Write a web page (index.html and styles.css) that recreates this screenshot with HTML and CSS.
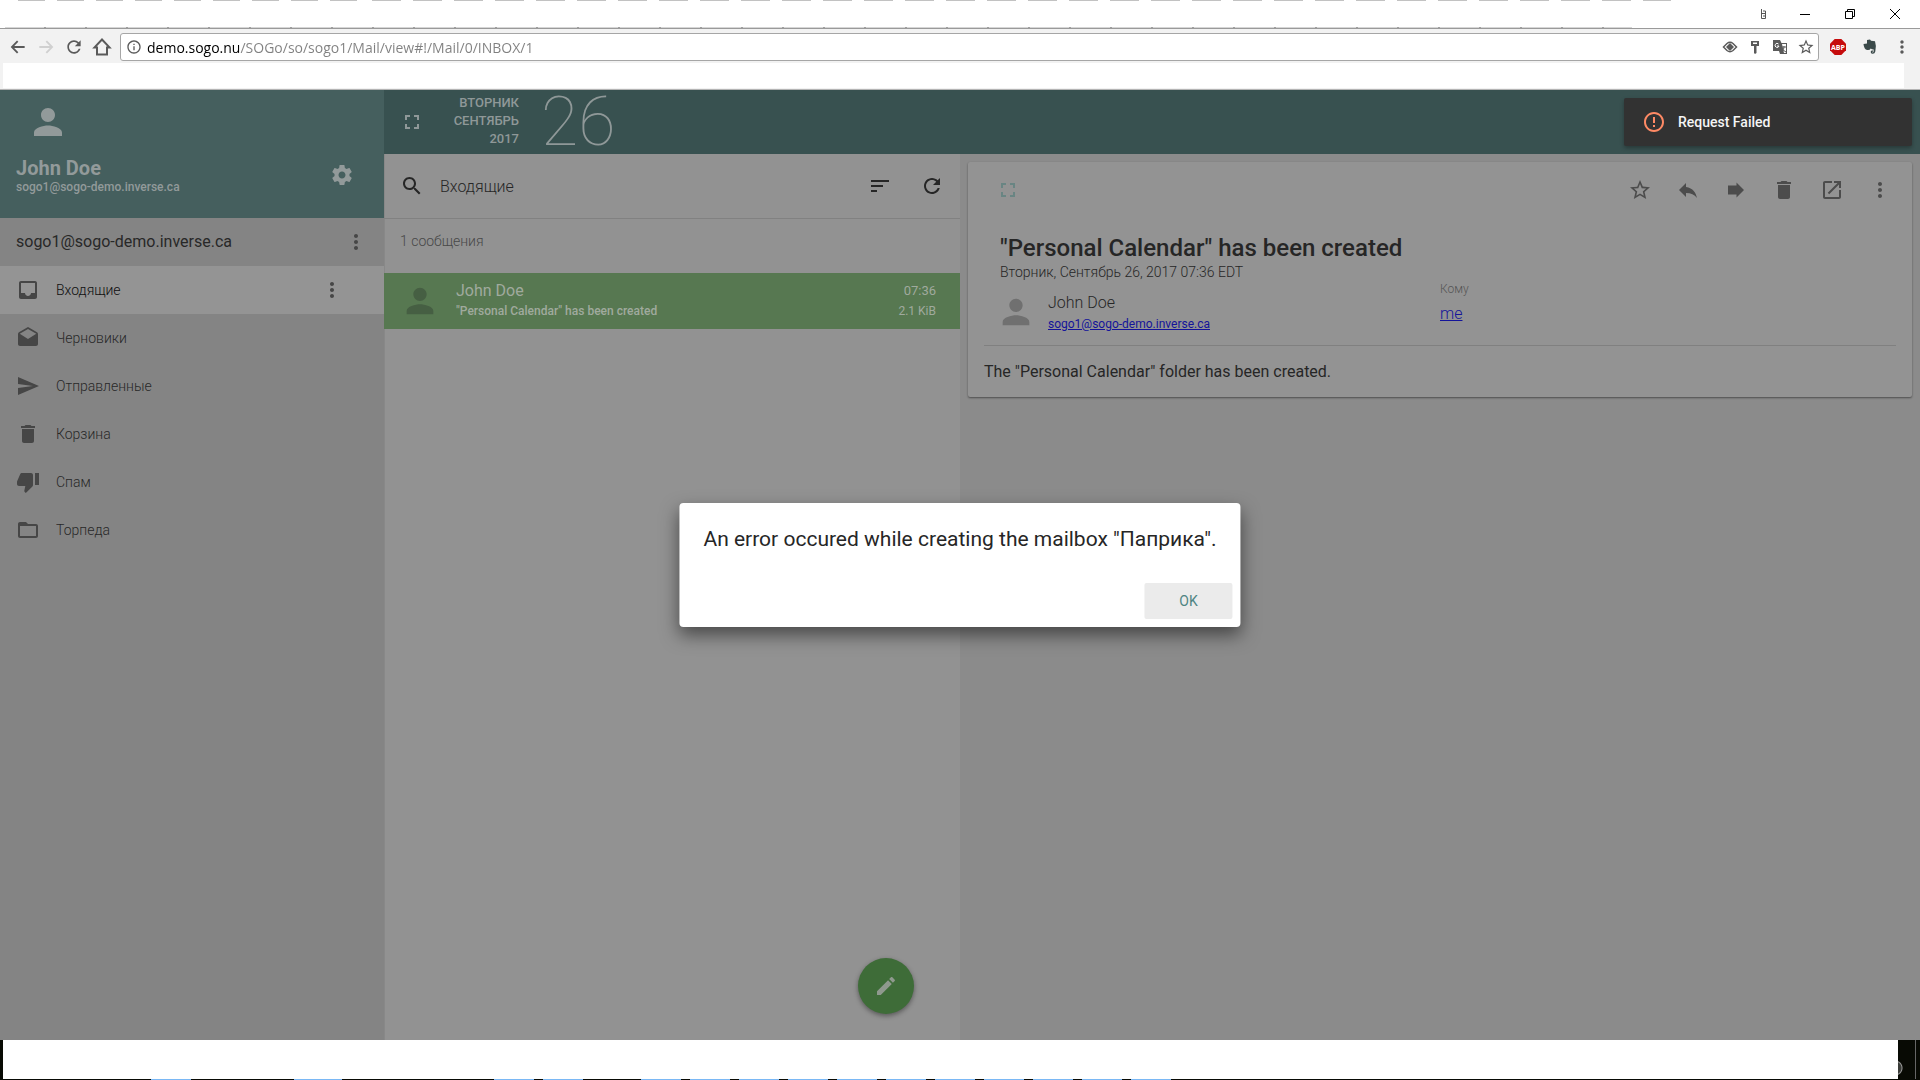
FILE: index.html
```
<!DOCTYPE html>
<html lang="ru">
<head>
    <meta charset="UTF-8">
    <meta name="viewport" content="width=device-width, initial-scale=1.0">
    <title>SOGo</title>
    <link rel="stylesheet" href="styles.css">
</head>
<body>

    <!-- Icons -->
    <svg class="sprite" aria-hidden="true">
        <symbol id="person" viewBox="0 0 24 24"><path d="M12 12c2.21 0 4-1.79 4-4s-1.79-4-4-4-4 1.790-4 4 1.790 4 4 4zm0 2c-2.670 0-8 1.340-8 4v2h16v-2c0-2.660-5.330-4-8-4z"/></symbol>
        <symbol id="gear" viewBox="0 0 24 24"><path d="M19.430 12.980c.04-.32.07-.64.07-.98s-.03-.66-.07-.98l2.110-1.650c.19-.15.24-.42.12-.64l-2-3.460c-.12-.22-.39-.3-.61-.22l-2.490 1c-.52-.4-1.080-.73-1.690-.98l-.38-2.650C14.460 2.180 14.250 2 14 2h-4c-.25 0-.46.18-.49.42l-.38 2.650c-.61.25-1.170.59-1.690.98l-2.490-1c-.23-.09-.49 0-.61.22l-2 3.460c-.13.22-.07.49.12.64l2.110 1.650c-.04.32-.07.65-.07.98s.03.66.07.98l-2.110 1.650c-.19.15-.24.42-.12.64l2 3.460c.12.22.39.3.61.22l2.490-1c.52.4 1.080.73 1.690.98l.38 2.650c.03.24.24.42.49.42h4c.25 0 .46-.18.49-.42l.38-2.650c.61-.25 1.170-.59 1.690-.98l2.490 1c.23.09.49 0 .61-.22l2-3.460c.12-.22.07-.49-.12-.64l-2.110-1.650zM12 15.500c-1.930 0-3.500-1.570-3.500-3.500s1.570-3.500 3.500-3.500 3.500 1.570 3.500 3.500-1.570 3.500-3.500 3.500z"/></symbol>
        <symbol id="more" viewBox="0 0 24 24"><path d="M12 8c1.100 0 2-.9 2-2s-.9-2-2-2-2 .9-2 2 .9 2 2 2zm0 2c-1.100 0-2 .9-2 2s.9 2 2 2 2-.9 2-2-.9-2-2-2zm0 6c-1.100 0-2 .9-2 2s.9 2 2 2 2-.9 2-2-.9-2-2-2z"/></symbol>
        <symbol id="inbox" viewBox="0 0 24 24"><path d="M19 3H5c-1.100 0-2 .9-2 2v14c0 1.100.89 2 2 2h14c1.100 0 2-.9 2-2V5c0-1.100-.9-2-2-2zm0 12h-4c0 1.660-1.350 3-3 3s-3-1.340-3-3H5V5h14v10z"/></symbol>
        <symbol id="drafts" viewBox="0 0 24 24"><path d="M21.990 8c0-.72-.37-1.350-.94-1.700L12 1 2.950 6.300C2.380 6.650 2 7.280 2 8v10c0 1.100.9 2 2 2h16c1.100 0 2-.9 2-2l-.01-10zM12 13L3.740 7.840 12 3l8.260 4.840L12 13z"/></symbol>
        <symbol id="send" viewBox="0 0 24 24"><path d="M2 21l21-9L2 3v7l15 2-15 2z"/></symbol>
        <symbol id="trash" viewBox="0 0 24 24"><path d="M6 19c0 1.100.9 2 2 2h8c1.100 0 2-.9 2-2V7H6v12zM19 4h-3.500l-1-1h-5l-1 1H5v2h14V4z"/></symbol>
        <symbol id="spam" viewBox="0 0 24 24"><path d="M15 3H6c-.83 0-1.540.5-1.840 1.220l-3.020 7.050c-.09.23-.14.47-.14.73v2c0 1.100.9 2 2 2h6.310l-.95 4.570-.03.32c0 .41.17.79.44 1.060L9.830 23l6.590-6.590c.36-.36.58-.86.58-1.410V5c0-1.100-.9-2-2-2zm4 0v12h4V3h-4z"/></symbol>
        <symbol id="folder" viewBox="0 0 24 24"><path d="M20 6h-8l-2-2H4c-1.100 0-1.990.9-1.990 2L2 18c0 1.100.9 2 2 2h16c1.100 0 2-.9 2-2V8c0-1.100-.9-2-2-2zm0 12H4V8h16v10z"/></symbol>
        <symbol id="fullscreen" viewBox="0 0 24 24"><path d="M7 14H5v5h5v-2H7v-3zm-2-4h2V7h3V5H5v5zm12 7h-3v2h5v-5h-2v3zM14 5v2h3v3h2V5h-5z"/></symbol>
        <symbol id="search" viewBox="0 0 24 24"><path d="M15.500 14h-.79l-.28-.27C15.410 12.590 16 11.110 16 9.500 16 5.910 13.090 3 9.500 3S3 5.910 3 9.500 5.910 16 9.500 16c1.610 0 3.090-.59 4.230-1.570l.27.28v.79l5 4.990L20.490 19l-4.990-5zm-6 0C7.010 14 5 11.990 5 9.500S7.010 5 9.500 5 14 7.010 14 9.500 11.990 14 9.500 14z"/></symbol>
        <symbol id="sort" viewBox="0 0 24 24"><path d="M3 18h6v-2H3v2zM3 6v2h18V6H3zm0 7h12v-2H3v2z"/></symbol>
        <symbol id="refresh" viewBox="0 0 24 24"><path d="M17.650 6.350C16.200 4.900 14.210 4 12 4c-4.420 0-7.990 3.580-7.990 8s3.570 8 7.990 8c3.730 0 6.840-2.550 7.730-6h-2.080c-.82 2.330-3.040 4-5.650 4-3.310 0-6-2.690-6-6s2.690-6 6-6c1.660 0 3.140.69 4.220 1.780L13 11h7V4l-2.350 2.350z"/></symbol>
        <symbol id="star" viewBox="0 0 24 24"><path d="M22 9.240l-7.190-.62L12 2 9.190 8.630 2 9.240l5.460 4.730L5.820 21 12 17.270 18.180 21l-1.630-7.030L22 9.240zM12 15.400l-3.760 2.270 1-4.280-3.320-2.880 4.380-.38L12 6.100l1.710 4.040 4.380.38-3.320 2.880 1 4.280L12 15.400z"/></symbol>
        <symbol id="reply" viewBox="0 0 24 24"><path d="M10 9V5l-7 7 7 7v-4.100c5 0 8.500 1.600 11 5.100-1-5-4-10-11-11z"/></symbol>
        <symbol id="forward" viewBox="0 0 24 24"><path d="M4 7.500h8.500V4.500L20 12l-7.500 7.500v-3H4z"/></symbol>
        <symbol id="open" viewBox="0 0 24 24"><path d="M19 19H5V5h7V3H5c-1.110 0-2 .9-2 2v14c0 1.100.89 2 2 2h14c1.100 0 2-.9 2-2v-7h-2v7zM14 3v2h3.590l-9.830 9.830 1.410 1.410L19 6.410V10h2V3h-7z"/></symbol>
        <symbol id="pencil" viewBox="0 0 24 24"><path d="M3 17.250V21h3.750L17.810 9.940l-3.750-3.750L3 17.250zM20.710 7.040c.39-.39.39-1.020 0-1.410l-2.340-2.340c-.39-.39-1.020-.39-1.410 0l-1.830 1.830 3.750 3.750 1.830-1.830z"/></symbol>
        <symbol id="alert" viewBox="0 0 24 24"><path d="M11 15h2v2h-2zm0-8h2v6h-2zm.99-5C6.470 2 2 6.480 2 12s4.470 10 9.990 10C17.520 22 22 17.520 22 12S17.520 2 11.990 2zM12 20c-4.420 0-8-3.580-8-8s3.580-8 8-8 8 3.580 8 8-3.580 8-8 8z"/></symbol>
        <symbol id="info" viewBox="0 0 24 24"><path d="M11 17h2v-6h-2v6zm1-15C6.480 2 2 6.480 2 12s4.480 10 10 10 10-4.480 10-10S17.520 2 12 2zm0 18c-4.410 0-8-3.590-8-8s3.590-8 8-8 8 3.590 8 8-3.590 8-8 8zM11 9h2V7h-2v2z"/></symbol>
        <symbol id="back" viewBox="0 0 24 24"><path d="M22 10.500H6.300l6.200-6.200L10.500 2.300 1 12l9.500 9.700 2-2-6.200-6.200H22z"/></symbol>
        <symbol id="home" viewBox="0 0 24 24"><path d="M12 3L3 12.500h3V21h12v-8.500h3z" fill="none" stroke="currentColor" stroke-width="2.400"/></symbol>
    </svg>

    <!-- Browser -->
    <header class="browser">
        <div class="tabs">
            <svg class="user-glyph" viewBox="0 0 8 10"><path d="M1.500 0v9.500M2 4.500h3.500v5h-4M3 2h2.500v3M3 7h2.500" fill="none" stroke="currentColor"/></svg>
            <button class="window-button" aria-label="Свернуть"><svg viewBox="0 0 12 12"><path d="M1 6.500h10"/></svg></button>
            <button class="window-button" aria-label="Восстановить"><svg viewBox="0 0 12 12"><path d="M1.500 3.500h7v7h-7zM3.500 3V1.500h7v7H9"/></svg></button>
            <button class="window-button" aria-label="Закрыть"><svg viewBox="0 0 12 12"><path d="M1 1l10 10M11 1L1 11"/></svg></button>
        </div>
        <div class="address-row">
            <button class="nav-button" aria-label="Назад"><svg><use href="#back"/></svg></button>
            <button class="nav-button disabled" aria-label="Вперёд" disabled><svg class="flip"><use href="#back"/></svg></button>
            <button class="nav-button" aria-label="Обновить"><svg class="big"><use href="#refresh"/></svg></button>
            <button class="nav-button" aria-label="Домой"><svg class="big"><use href="#home"/></svg></button>
            <div class="omnibox">
                <svg><use href="#info"/></svg>
                <input class="url" type="text" aria-label="Адрес" value="demo.sogo.nu/SOGo/so/sogo1/Mail/view#!/Mail/0/INBOX/1">
                <svg viewBox="0 0 16 16"><path d="M1.500 8L5 4.500Q8 2 11 4.500L14.500 8 11 11.500Q8 14 5 11.500z" fill="none" stroke="currentColor" stroke-width="1.500"/><path d="M8 4l4 4-4 4-4-4z"/></svg>
                <svg viewBox="0 0 16 16"><path d="M4 2h8v5H9.500v7l-1.500 1-1-1V7H4zM6 3.500V5h4V3.500z" fill-rule="evenodd"/></svg>
                <svg viewBox="0 0 16 16"><path d="M1 1h7l1.500 3H15v11H8l-1-3H1zM10 5l2 9h2V5z" fill-rule="evenodd"/><path d="M6.500 5A2 2 0 1 0 7 7H5" fill="none" stroke="#fff"/><path d="M10 8h4M12 7c0 3-1 4-1 4l3 2" fill="none" stroke="currentColor"/></svg>
                <svg class="bookmark"><use href="#star"/></svg>
            </div>
            <button class="extension" aria-label="Adblock Plus">
                <svg viewBox="0 0 16 16"><path d="M4.700 0h6.600L16 4.700v6.600L11.300 16H4.700L0 11.300V4.700z" fill="#c60c0d"/><text x="8" y="11" class="abp">ABP</text></svg>
            </button>
            <button class="extension" aria-label="Evernote">
                <svg viewBox="0 0 16 16"><path d="M5 1l3-.5 1 1.200 4 .6q1.700 5 .3 10.200-.5 2.500-2.800 2.300-2 0-1.800-2 .3-1.700 2.300-1.300v1.200h-1q-.3.8.8.8 1 0 .9-3-2 0-3-1-1 2-3.500 1.500Q2 10.500 1.500 5L5 4.500z"/></svg>
            </button>
            <button class="extension" aria-label="Меню"><svg class="menu"><use href="#more"/></svg></button>
        </div>
        <div class="bookmarks"></div>
    </header>

    <div class="app">
        <!-- Folders -->
        <aside class="sidebar">
            <div class="profile">
                <svg class="avatar"><use href="#person"/></svg>
                <div class="profile-row">
                    <div>
                        <h2>John Doe</h2>
                        <p>sogo1@sogo-demo.inverse.ca</p>
                    </div>
                    <button class="icon-button" aria-label="Настройки"><svg><use href="#gear"/></svg></button>
                </div>
            </div>
            <div class="account">
                <span>sogo1@sogo-demo.inverse.ca</span>
                <button class="icon-button" aria-label="Меню ящика"><svg><use href="#more"/></svg></button>
            </div>
            <nav class="folders">
                <div class="folder active">
                    <a href="#"><svg><use href="#inbox"/></svg>Входящие</a>
                    <button class="icon-button" aria-label="Меню папки"><svg><use href="#more"/></svg></button>
                </div>
                <div class="folder"><a href="#"><svg><use href="#drafts"/></svg>Черновики</a></div>
                <div class="folder"><a href="#"><svg><use href="#send"/></svg>Отправленные</a></div>
                <div class="folder"><a href="#"><svg><use href="#trash"/></svg>Корзина</a></div>
                <div class="folder"><a href="#"><svg><use href="#spam"/></svg>Спам</a></div>
                <div class="folder"><a href="#"><svg><use href="#folder"/></svg>Торпеда</a></div>
            </nav>
        </aside>

        <main class="main">
            <div class="topbar">
                <button class="icon-button" aria-label="Во весь экран"><svg><use href="#fullscreen"/></svg></button>
                <div class="date">Вторник<br>Сентябрь<br>2017</div>
                <div class="day">26</div>
            </div>

            <div class="panes">
                <!-- Message list -->
                <section class="list">
                    <div class="list-toolbar">
                        <button class="icon-button" aria-label="Поиск"><svg><use href="#search"/></svg></button>
                        <h1>Входящие</h1>
                        <button class="icon-button" aria-label="Сортировка"><svg><use href="#sort"/></svg></button>
                        <button class="icon-button" aria-label="Обновить"><svg><use href="#refresh"/></svg></button>
                    </div>
                    <p class="count">1 сообщения</p>
                    <a class="message" href="#">
                        <svg><use href="#person"/></svg>
                        <span class="message-text"><b>John Doe</b><span>"Personal Calendar" has been created</span></span>
                        <span class="message-meta"><time>07:36</time><span>2.1 KiB</span></span>
                    </a>
                    <button class="compose" aria-label="Написать"><svg><use href="#pencil"/></svg></button>
                </section>

                <!-- Message -->
                <section class="view">
                    <article class="card">
                        <div class="card-toolbar">
                            <button class="icon-button expand" aria-label="Развернуть"><svg><use href="#fullscreen"/></svg></button>
                            <button class="icon-button" aria-label="Отметить"><svg><use href="#star"/></svg></button>
                            <button class="icon-button" aria-label="Ответить"><svg><use href="#reply"/></svg></button>
                            <button class="icon-button" aria-label="Переслать"><svg><use href="#forward"/></svg></button>
                            <button class="icon-button" aria-label="Удалить"><svg><use href="#trash"/></svg></button>
                            <button class="icon-button" aria-label="В новом окне"><svg><use href="#open"/></svg></button>
                            <button class="icon-button" aria-label="Ещё"><svg><use href="#more"/></svg></button>
                        </div>
                        <div class="card-head">
                            <h2>"Personal Calendar" has been created</h2>
                            <time>Вторник, Сентябрь 26, 2017 07:36 EDT</time>
                            <div class="people">
                                <div class="sender">
                                    <svg><use href="#person"/></svg>
                                    <div>
                                        <p>John Doe</p>
                                        <a href="#">sogo1@sogo-demo.inverse.ca</a>
                                    </div>
                                </div>
                                <div class="recipient">
                                    <span>Кому</span>
                                    <a href="#">me</a>
                                </div>
                            </div>
                        </div>
                        <p class="card-body">The "Personal Calendar" folder has been created.</p>
                    </article>
                </section>
            </div>
        </main>

        <div class="toast" role="alert"><svg><use href="#alert"/></svg>Request Failed</div>
    </div>

    <div class="dialog" role="alertdialog" aria-labelledby="dialog-text">
        <p id="dialog-text">An error occured while creating the mailbox "Паприка".</p>
        <button class="ok">OK</button>
    </div>

    <footer class="taskbar">
        <div class="taskbar-blank"></div>
        <div class="tray"></div>
    </footer>

</body>
</html>
```
FILE: styles.css
```
* {
    box-sizing: border-box;
}
body {
    margin: 0;
    height: 100vh;
    display: flex;
    flex-direction: column;
    overflow: hidden;
    font-family: Roboto, "Noto Sans", sans-serif;
    font-size: 14px;
    font-weight: 300;
    color: #262626;
}
h1, h2, p {
    margin: 0;
}
a {
    color: inherit;
    text-decoration: none;
}
button {
    padding: 0;
    border: 0;
    background: none;
    color: inherit;
    font: inherit;
}
svg {
    width: 24px;
    height: 24px;
    flex: none;
    display: block;
    fill: currentColor;
}
.sprite {
    display: none;
}

/* Browser */
.browser {
    height: 90px;
    background: #f2f2f2;
    border-bottom: 1px solid #b4b4b4;
}
.tabs {
    height: 29px;
    padding-bottom: 1px;
    display: flex;
    justify-content: flex-end;
    align-items: center;
    border-bottom: 1px solid #9a9a9a;
    background:
        repeating-linear-gradient(90deg, #c2c2c2 0 27px, transparent 27px 39px) 18px 0 / 344px 1px no-repeat,
        repeating-linear-gradient(90deg, #c2c2c2 0 29px, transparent 29px 41px) 372px 0 / 1299px 1px no-repeat,
        repeating-linear-gradient(90deg, #d6d6d6 0 39px, #a0a0a0 39px 41px) 5px 27px / 1627px 1px no-repeat,
        #fff;
}
.user-glyph {
    width: 8px;
    height: 10px;
    margin-right: 14px;
    color: #555;
}
.window-button {
    width: 45px;
    height: 28px;
    display: flex;
    justify-content: center;
    align-items: center;
}
.window-button svg {
    width: 12px;
    height: 12px;
    fill: none;
    stroke: #000;
}
.window-button:last-child {
    margin-right: 3px;
}
.address-row {
    height: 34px;
    padding: 2px 2px 0 4px;
    display: flex;
    align-items: center;
    color: #5a5a5a;
}
.nav-button {
    width: 28px;
    display: flex;
    justify-content: center;
}
.nav-button svg {
    width: 16px;
    height: 16px;
}
.nav-button svg.big {
    width: 20px;
    height: 20px;
}
.nav-button .flip {
    transform: scaleX(-1);
}
.nav-button.disabled {
    color: #d0d0d0;
}
.omnibox {
    flex: 1;
    height: 28px;
    margin: 0 3px 0 4px;
    padding: 0 5px;
    display: flex;
    align-items: center;
    gap: 9px;
    border: 1px solid #a6a6a6;
    border-radius: 3px;
    background: #fff;
}
.omnibox svg {
    width: 16px;
    height: 16px;
}
.omnibox svg.bookmark {
    width: 18px;
    height: 18px;
    margin-right: -2px;
}
.url {
    flex: 1;
    margin-left: -4px;
    padding: 0;
    border: 0;
    outline: 0;
    font: 14px "Open Sans", sans-serif;
    color: transparent;
    background: linear-gradient(90deg, #000 92px, #808080 92px);
    -webkit-background-clip: text;
    background-clip: text;
}
.extension {
    width: 32px;
    display: flex;
    justify-content: center;
    color: #3b4a4a;
}
.extension svg {
    width: 16px;
    height: 16px;
}
.extension svg.menu {
    width: 20px;
    height: 20px;
    color: #5a5a5a;
}
.abp {
    font: bold 7px "Open Sans", sans-serif;
    text-anchor: middle;
    fill: #fff;
}
.bookmarks {
    height: 25px;
    margin: 0 16px 0 3px;
    background: #fff;
}

/* Mail */
.app {
    flex: 1;
    min-height: 0;
    display: flex;
    position: relative;
}
.icon-button {
    width: 48px;
    height: 40px;
    flex: none;
    display: flex;
    justify-content: center;
    align-items: center;
}
.sidebar {
    flex: 0 0 20%;
    background: #848484;
    color: #282828;
}
.profile {
    height: 128px;
    padding: 11px 18px 0 16px;
    background: #455f5e;
    color: #929a9a;
}
.avatar {
    width: 42px;
    height: 42px;
    margin-left: 11px;
}
.profile-row {
    padding-top: 12px;
    display: flex;
    justify-content: space-between;
    align-items: center;
}
.profile-row h2 {
    font-size: 20px;
    line-height: 24px;
    font-weight: 700;
}
.profile-row p {
    font-size: 12px;
    line-height: 14px;
    font-weight: 500;
}
.account {
    height: 48px;
    padding: 0 4px 0 16px;
    display: flex;
    justify-content: space-between;
    align-items: center;
    font-size: 16px;
    font-weight: 400;
}
.account span {
    padding-bottom: 2px;
}
.folder {
    height: 48px;
    padding: 0 28px 0 16px;
    display: flex;
    align-items: center;
}
.folder a {
    flex: 1;
    display: flex;
    align-items: center;
    gap: 16px;
    line-height: 24px;
}
.folder svg, .account svg {
    color: #464646;
}
.folder.active {
    background: #949494;
    color: #101010;
}
.main {
    flex: 1;
    display: flex;
    flex-direction: column;
}
.topbar {
    height: 64px;
    padding-left: 4px;
    display: flex;
    align-items: center;
    background: #385150;
    color: #8f9898;
}
.date {
    width: 83px;
    padding-bottom: 2px;
    font-size: 13px;
    line-height: 18px;
    font-weight: 500;
    text-align: right;
    text-transform: uppercase;
}
.day {
    margin-left: 22px;
    font-size: 68px;
    line-height: 64px;
    font-weight: 100;
}
.panes {
    flex: 1;
    display: flex;
    background: #8b8b8b;
}
.list {
    flex: 0 0 37.5%;
    position: relative;
    background: #929292;
    box-shadow: inset 1px 0 #888;
}
.list-toolbar {
    height: 65px;
    padding: 0 4px;
    display: flex;
    align-items: center;
    gap: 4px;
    border-bottom: 1px solid #818181;
}
.list-toolbar h1 {
    flex: 1;
    font-size: 16px;
    font-weight: 300;
}
.count {
    height: 54px;
    padding: 12px 16px;
    line-height: 20px;
    color: #484848;
}
.message {
    height: 56px;
    padding: 0 24px 0 16px;
    display: flex;
    align-items: center;
    gap: 16px;
    background: #577851;
    color: #a0aa9e;
    font-size: 12px;
    font-weight: 400;
}
.message svg {
    width: 40px;
    height: 40px;
    color: #465f43;
}
.message-text, .message-meta {
    display: grid;
    line-height: 20px;
}
.message-text {
    flex: 1;
    font-weight: 500;
}
.message-text b {
    font-size: 16px;
    font-weight: 400;
}
.message-meta {
    text-align: right;
}
.message-meta time {
    font-size: 13px;
}
.compose {
    position: absolute;
    right: 46px;
    bottom: 26px;
    width: 56px;
    height: 56px;
    display: flex;
    justify-content: center;
    align-items: center;
    border-radius: 50%;
    background: #3e6c38;
    color: #8f998e;
    box-shadow: 0 2px 5px rgba(0, 0, 0, 0.4);
}
.view {
    flex: 1;
    padding: 8px;
}
.card {
    padding-bottom: 15px;
    border-radius: 2px;
    background: #939393;
    box-shadow: 0 1px 2px rgba(0, 0, 0, 0.45);
}
.card-toolbar {
    height: 56px;
    padding: 0 8px 0 16px;
    display: flex;
    align-items: center;
    color: #4c4c4c;
}
.expand {
    margin-right: auto;
    color: #698583;
}
.card-head {
    margin: 0 16px;
    padding: 14px 16px 9px;
    border-bottom: 1px solid #808080;
}
.card-head h2 {
    font-size: 24px;
    line-height: 32px;
    font-weight: 500;
}
.card-head time {
    display: block;
    line-height: 16px;
}
.people {
    display: flex;
    font-size: 12px;
}
.people a {
    color: #14149a;
    text-decoration: underline;
}
.sender {
    flex: 0 0 50%;
    height: 56px;
    padding-top: 12px;
    display: flex;
    gap: 16px;
}
.sender svg {
    width: 40px;
    height: 40px;
    margin-left: -4px;
    color: #707070;
}
.sender div {
    margin-left: -4px;
    font-weight: 400;
}
.sender p {
    font-size: 16px;
    line-height: 22px;
    font-weight: 300;
}
.sender a {
    line-height: 20px;
}
.recipient {
    line-height: 18px;
    color: #555;
}
.recipient a {
    display: block;
    margin-top: 4px;
    font-size: 16px;
    line-height: 24px;
}
.card-body {
    padding: 16px 16px 0;
    font-size: 16px;
    line-height: 20px;
    font-weight: 400;
}

/* Popups */
.toast {
    position: absolute;
    top: 8px;
    right: 8px;
    width: 288px;
    height: 48px;
    padding: 0 18px;
    display: flex;
    align-items: center;
    gap: 12px;
    border-radius: 2px;
    background: #323232;
    color: #f5f5f5;
    font-weight: 500;
    box-shadow: 0 2px 4px rgba(0, 0, 0, 0.3);
}
.toast svg {
    color: #ff8a65;
}
.dialog {
    position: absolute;
    top: 565px;
    left: 50%;
    transform: translate(-50%, -50%);
    padding: 24px 8px 8px 24px;
    display: flex;
    flex-direction: column;
    align-items: flex-end;
    gap: 32px;
    border-radius: 4px;
    background: #fff;
    box-shadow: 0 8px 18px rgba(0, 0, 0, 0.5);
}
.dialog p {
    padding-right: 16px;
    font-size: 21px;
    line-height: 24px;
    font-weight: 400;
    white-space: nowrap;
}
.ok {
    width: 88px;
    height: 36px;
    border-radius: 2px;
    background: #ebebeb;
    color: #4f8583;
    font-weight: 400;
}

/* Taskbar */
.taskbar {
    height: 40px;
    padding: 0 0 1px 3px;
    display: flex;
    background:
        linear-gradient(#7ab8f5, #7ab8f5) 151px 39px / 40px 1px no-repeat,
        linear-gradient(#7ab8f5, #7ab8f5) 294px 39px / 48px 1px no-repeat,
        linear-gradient(#7ab8f5, #7ab8f5) 494px 39px / 40px 1px no-repeat,
        linear-gradient(#7ab8f5, #7ab8f5) 543px 39px / 40px 1px no-repeat,
        repeating-linear-gradient(90deg, #7ab8f5 0 40px, #080a04 40px 49px) 641px 39px / 530px 1px no-repeat,
        #080a04;
}
.taskbar-blank {
    flex: 1;
    background: #fff;
}
.tray {
    width: 22px;
    background:
        linear-gradient(#666, #666) 17px 0 / 1px 100% no-repeat,
        radial-gradient(circle at -3px 28px, #3a3c38 6px, #999 7px, transparent 8px);
}
```
